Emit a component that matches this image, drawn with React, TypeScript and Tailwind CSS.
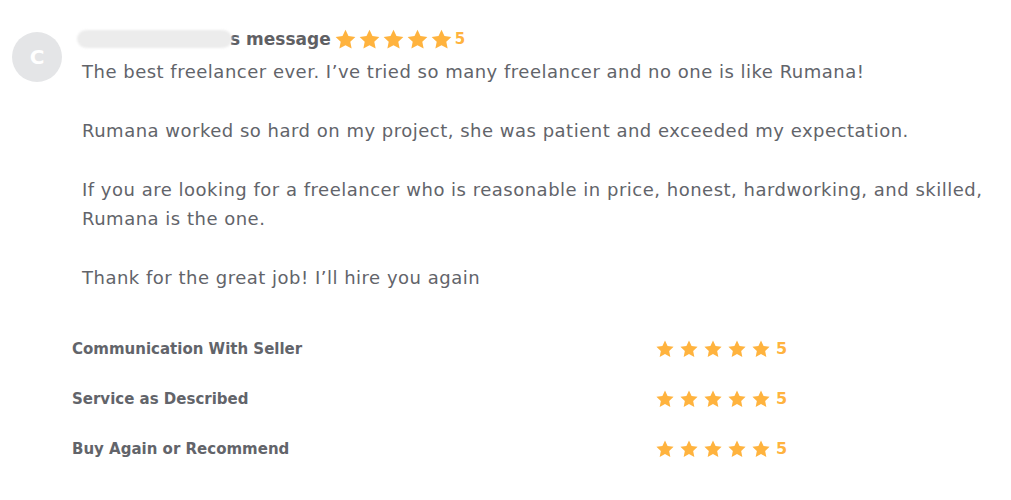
import React from 'react';

const Star: React.FC<{ size: number }> = ({ size }) => (
  <svg width={size} height={size} viewBox="0 0 24 24" fill="#ffb33e">
    <path d="M12 1.8l3.1 6.6 7.2.9-5.3 5 1.4 7.2L12 18l-6.4 3.5L7 14.3l-5.3-5 7.2-.9z" />
  </svg>
);

const Stars: React.FC<{ size: number; gap: string; value: number; text: string }> = ({ size, gap, value, text }) => (
  <div className={`flex items-center ${gap}`}>
    {[0, 1, 2, 3, 4].map((i) => (
      <Star key={i} size={size} />
    ))}
    <span className={`ml-[1px] font-bold text-[#ffb33e] ${text}`}>{value}</span>
  </div>
);

const ratings = ['Communication With Seller', 'Service as Described', 'Buy Again or Recommend'];

const paragraphs = [
  'The best freelancer ever. I\u2019ve tried so many freelancer and no one is like Rumana!',
  'Rumana worked so hard on my project, she was patient and exceeded my expectation.',
  'If you are looking for a freelancer who is reasonable in price, honest, hardworking, and skilled, Rumana is the one.',
  'Thank for the great job! I\u2019ll hire you again',
];

export default function App() {
  return (
    <div
      className="w-[1011px] h-[500px] bg-white text-[#62646a]"
      style={{ fontFamily: '"DejaVu Sans", Verdana, sans-serif' }}
    >
      <div className="flex pt-[32px] pl-[12px] pr-[20px]">
        <div className="w-[50px] h-[50px] shrink-0 rounded-full bg-[#e4e5e7] flex items-center justify-center text-white font-bold text-[20px]">
          C
        </div>
        <div className="ml-[20px] flex-1">
          <div className="flex items-center h-[16px] -mt-[1px]">
            <div className="-ml-[5px] w-[155px] h-[18px] rounded-full bg-[#ececec] blur-[1px]" />
            <span className="text-[17px] font-bold text-[#5f6064] leading-none -ml-[2px]">s message</span>
            <div className="ml-[3px]">
              <Stars size={23} gap="gap-[1px]" value={5} text="text-[15px]" />
            </div>
          </div>
          <div className="mt-[10px] text-[18px] leading-[29px] tracking-[0.5px] flex flex-col gap-[30px]">
            {paragraphs.map((p) => (
              <p key={p}>{p}</p>
            ))}
          </div>
        </div>
      </div>
      <div className="mt-[48px] pl-[72px] flex flex-col gap-[32px]">
        {ratings.map((r) => (
          <div key={r} className="flex items-center h-[18px]">
            <div className="w-[583px] text-[15px] font-bold text-[#62646a]">{r}</div>
            <Stars size={20} gap="gap-[4px]" value={5} text="text-[16px]" />
          </div>
        ))}
      </div>
    </div>
  );
}
